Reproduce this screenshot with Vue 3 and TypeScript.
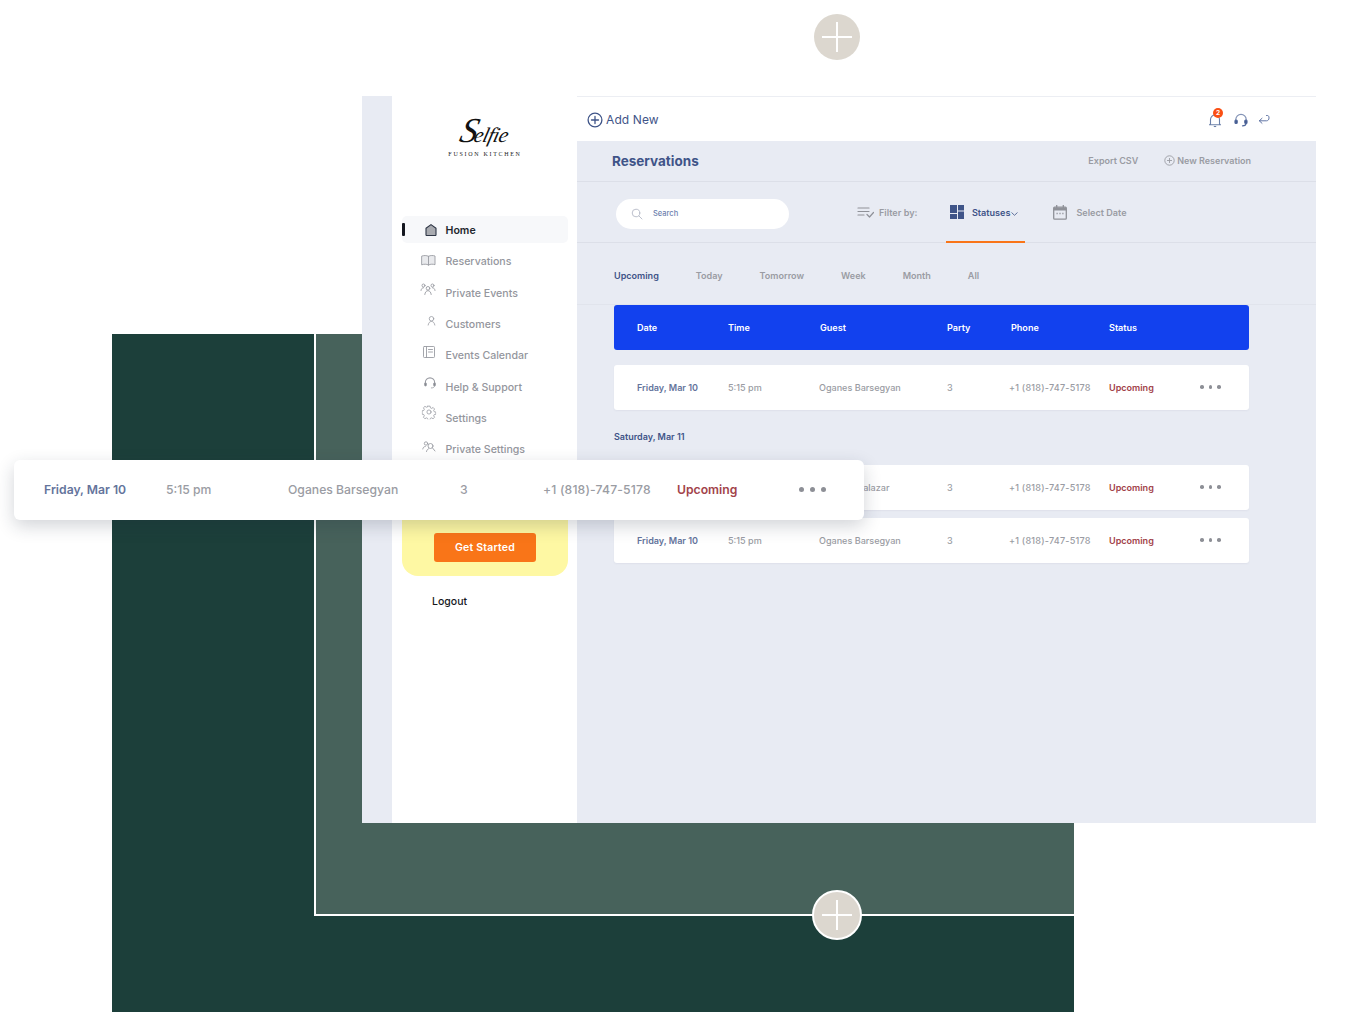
<script setup lang="ts">
interface Reservation {
  date: string;
  time: string;
  guest: string;
  party: number;
  phone: string;
  status: string;
}

interface NavItem {
  label: string;
  icon: string;
  active?: boolean;
}

const navItems: NavItem[] = [
  { label: 'Home', icon: 'home', active: true },
  { label: 'Reservations', icon: 'book' },
  { label: 'Private Events', icon: 'group' },
  { label: 'Customers', icon: 'user' },
  { label: 'Events Calendar', icon: 'ledger' },
  { label: 'Help & Support', icon: 'headset' },
  { label: 'Settings', icon: 'gear' },
  { label: 'Private Settings', icon: 'usersearch' },
];

const tabs = ['Upcoming', 'Today', 'Tomorrow', 'Week', 'Month', 'All'];
const columns = ['Date', 'Time', 'Guest', 'Party', 'Phone', 'Status'];

const base: Reservation = {
  date: 'Friday, Mar 10',
  time: '5:15 pm',
  guest: 'Oganes Barsegyan',
  party: 3,
  phone: '+1 (818)-747-5178',
  status: 'Upcoming',
};

// first row sits partly under the floating card, date and time are covered
const saturday: Reservation[] = [
  { ...base, date: '', time: '', guest: 'Maria A. Salazar' },
  base,
];
</script>

<template>
  <div class="canvas">
    <div class="block-dark"></div>
    <div class="block-light"></div>

    <div class="plus plus-top"><span class="plus-mark"></span></div>

    <div class="app">
      <div class="strip"></div>

      <aside class="sidebar">
        <div class="logo">
          <div class="logo-script"><span class="logo-cap">S</span>elfie</div>
          <div class="logo-sub">FUSION KITCHEN</div>
        </div>

        <nav class="nav">
          <a v-for="item in navItems" :key="item.label" class="nav-item" :class="{ active: item.active }">
            <span class="nav-icon" :class="`i-${item.icon}`">
              <svg width="16" height="16" viewBox="0 0 16 16" fill="none" stroke="#9a9ca3" stroke-width=".9" stroke-linecap="round" stroke-linejoin="round">
                <template v-if="item.icon === 'home'">
                  <path d="M3 6.200 8 2.600l5 3.600v6.600a.7.7 0 0 1-.7.7H3.700a.7.7 0 0 1-.7-.7z" fill="#a9abb0" stroke="#2e3645" stroke-width="1.100" />
                </template>
                <template v-else-if="item.icon === 'book'">
                  <path d="M1.500 3.500C3.500 2.800 6 2.800 8 3.800c2-1 4.500-1 6.500-.3v8.700c-2-.7-4.500-.7-6.500.3-2-1-4.500-1-6.500-.3z" fill="#e9eaed" />
                  <path d="M8 3.800v8.900" />
                </template>
                <template v-else-if="item.icon === 'group'">
                  <circle cx="8" cy="6.800" r="1.800" />
                  <path d="M4.800 13c.3-2.500 1.600-3.800 3.200-3.800s2.900 1.300 3.200 3.800" />
                  <circle cx="3.500" cy="4" r="1.500" />
                  <circle cx="12.500" cy="4" r="1.500" />
                  <path d="M1 9c.2-1.500 1-2.700 2.500-2.800M15 9c-.2-1.500-1-2.700-2.500-2.800" />
                </template>
                <template v-else-if="item.icon === 'user'">
                  <circle cx="8" cy="5.500" r="2.500" />
                  <path d="M4.300 12.500c.4-2.500 1.800-4 3.700-4s3.300 1.500 3.700 4" />
                </template>
                <template v-else-if="item.icon === 'ledger'">
                  <rect x="2.500" y="2.500" width="11" height="11" rx=".8" />
                  <path d="M5.500 2.500v11M7.500 5.500h4M7.500 8h4" />
                </template>
                <template v-else-if="item.icon === 'headset'">
                  <path d="M2.800 9V7.500a5.200 5.200 0 0 1 10.400 0V9" stroke-width="1.200" />
                  <rect x="2" y="7.800" width="2" height="3.500" rx=".9" fill="#85878e" />
                  <rect x="12" y="7.800" width="2" height="3.500" rx=".9" fill="#85878e" />
                  <path d="M13 11.500c0 1.400-1.500 2-3.500 2" />
                </template>
                <template v-else-if="item.icon === 'gear'">
                  <circle cx="8" cy="8" r="2.300" />
                  <path d="M6.800 1.500h2.400l.4 1.900 1.300.6 1.700-1 1.600 1.700-1 1.600.6 1.400 1.900.4v2.400l-1.900.4-.6 1.300 1 1.700-1.700 1.600-1.600-1-1.400.6-.4 1.900H6.800l-.4-1.900-1.300-.6-1.700 1-1.600-1.700 1-1.600-.6-1.400-1.900-.4V6.700l1.900-.4.6-1.300-1-1.700 1.700-1.600 1.600 1 1.400-.6z" />
                </template>
                <template v-else>
                  <circle cx="9.500" cy="7" r="2.500" />
                  <path d="M11.400 8.800 14 12M5.500 12.500c.3-1.500 1-2.300 2-2.700M4.300 7.500C2.900 7.500 2 8.500 1.800 10" />
                  <circle cx="5" cy="4.500" r="1.700" />
                </template>
              </svg>
            </span>
            <span class="nav-label">{{ item.label }}</span>
          </a>
        </nav>

        <div class="promo">
          <button class="promo-btn" type="button">Get Started</button>
        </div>
        <div class="logout">Logout</div>
      </aside>

      <main class="main">
        <header class="topbar">
          <div class="add-new">
            <svg width="16" height="16" viewBox="0 0 16 16" fill="none" stroke="#3f5488" stroke-width="1.300" stroke-linecap="round">
              <circle cx="8" cy="8" r="6.900" />
              <path d="M8 4.500v7M4.500 8h7" />
            </svg>
            <span>Add New</span>
          </div>
          <div class="top-icons">
            <span class="bell">
              <svg width="14" height="16" viewBox="0 0 14 16" fill="none" stroke="#6a7fa8" stroke-width="1.100" stroke-linejoin="round">
                <path d="M2.500 11.800V7.500a4.500 4.500 0 0 1 9 0v4.300l1 1h-11z" />
                <path d="M5.800 14.500h2.400" />
              </svg>
              <span class="badge">2</span>
            </span>
            <svg class="top-headset" width="14" height="14" viewBox="0 0 14 14" fill="none" stroke="#51689c" stroke-width="1.200" stroke-linecap="round">
              <path d="M1.800 8V6.500a5.200 5.200 0 0 1 10.400 0V8" stroke="#8393b6" />
              <rect x="1" y="7" width="2.200" height="3.500" rx=".9" fill="#3f5488" />
              <rect x="10.800" y="7" width="2.200" height="3.500" rx=".9" fill="#3f5488" />
              <path d="M12 10.500c0 1.500-1.500 2.300-3.500 2.300" />
            </svg>
            <svg width="12" height="11" viewBox="0 0 12 11" fill="none" stroke="#51689c" stroke-width=".9" stroke-linecap="round" stroke-linejoin="round">
              <path d="M8.500 1.500h1c1 0 1.500 1 1.500 2.500s-.8 2.800-2.500 2.800H1.500" />
              <path d="M4 4.300 1.300 6.800 4 9.300" />
            </svg>
          </div>
        </header>

        <section class="title-bar">
          <h1>Reservations</h1>
          <div class="title-actions">
            <span class="title-action">Export CSV</span>
            <span class="title-action new">
              <svg width="11" height="11" viewBox="0 0 11 11" fill="none" stroke="#9a9ca3" stroke-width=".9">
                <circle cx="5.500" cy="5.500" r="4.700" />
                <path d="M5.500 3v5M3 5.500h5" />
              </svg>
              New Reservation
            </span>
          </div>
        </section>

        <section class="filter-bar">
          <div class="search">
            <svg width="12" height="12" viewBox="0 0 12 12" fill="none" stroke="#b4b9c6" stroke-width=".9" stroke-linecap="round">
              <circle cx="5" cy="5" r="3.800" />
              <path d="M8 8l3 3" />
            </svg>
            <span>Search</span>
          </div>
          <div class="filter-label">
            <svg width="17" height="12" viewBox="0 0 17 12" fill="none" stroke="#8f9198" stroke-width="1.200" stroke-linecap="round" stroke-linejoin="round">
              <path d="M1 2h11M1 5.500h11M1 9h6M10 8.500l2.500 2.500 4-4.500" />
            </svg>
            <span>Filter by:</span>
          </div>
          <div class="statuses">
            <svg width="14" height="14" viewBox="0 0 14 14" fill="#3f5488">
              <rect x="0" y="0" width="7" height="8" />
              <rect x="8" y="0" width="6" height="5.500" />
              <rect x="0" y="9" width="7" height="5" />
              <rect x="8" y="6.500" width="6" height="7.500" />
            </svg>
            <span>Statuses</span>
            <svg class="chevron" width="7" height="4" viewBox="0 0 7 4" fill="none" stroke="#3f5488" stroke-width=".8">
              <path d="M.5.500 3.500 3.300 6.500.500" />
            </svg>
          </div>
          <div class="select-date">
            <svg width="14" height="15" viewBox="0 0 14 15" fill="none" stroke="#8f9198" stroke-width="1.300">
              <rect x=".7" y="2.200" width="12.600" height="12" rx="1" />
              <path d="M.7 4h12.600" stroke-width="3" />
              <path d="M3.700 0v3M10.300 0v3" />
              <path d="M3.500 8.500h1.200M6.400 8.500h1.200M9.300 8.500h1.200" />
            </svg>
            <span>Select Date</span>
          </div>
        </section>

        <section class="tabs">
          <span v-for="(tab, i) in tabs" :key="tab" class="tab" :class="{ current: i === 0 }">{{ tab }}</span>
        </section>

        <section class="table">
          <div class="table-head">
            <span v-for="col in columns" :key="col">{{ col }}</span>
          </div>

          <div class="row">
            <span class="r-date">{{ base.date }}</span>
            <span>{{ base.time }}</span>
            <span>{{ base.guest }}</span>
            <span>{{ base.party }}</span>
            <span class="r-phone">{{ base.phone }}</span>
            <span class="r-status">{{ base.status }}</span>
            <span class="dots"><i></i><i></i><i></i></span>
          </div>

          <div class="day">Saturday, Mar 11</div>

          <div v-for="(r, i) in saturday" :key="i" class="row tight">
            <span class="r-date">{{ r.date }}</span>
            <span>{{ r.time }}</span>
            <span>{{ r.guest }}</span>
            <span>{{ r.party }}</span>
            <span class="r-phone">{{ r.phone }}</span>
            <span class="r-status">{{ r.status }}</span>
            <span class="dots"><i></i><i></i><i></i></span>
          </div>
        </section>
      </main>
    </div>

    <div class="float-row">
      <span class="r-date">{{ base.date }}</span>
      <span>{{ base.time }}</span>
      <span>{{ base.guest }}</span>
      <span>{{ base.party }}</span>
      <span class="r-phone">{{ base.phone }}</span>
      <span class="r-status">{{ base.status }}</span>
      <span class="dots"><i></i><i></i><i></i></span>
    </div>

    <div class="plus plus-bottom"><span class="plus-mark"></span></div>
  </div>
</template>

<style>
body {
  margin: 0;
  background: #fff;
}
</style>

<style scoped>
.canvas {
  position: relative;
  width: 1358px;
  height: 1012px;
  overflow: hidden;
  background: #fff;
  font-family: Inter, "Liberation Sans", sans-serif;
}

/* free canvas layers */
.block-dark {
  position: absolute;
  left: 112px;
  top: 334px;
  width: 962px;
  height: 678px;
  background: #1c3f3a;
}

.block-light {
  position: absolute;
  left: 314px;
  top: 334px;
  width: 760px;
  height: 582px;
  box-sizing: border-box;
  background: #47625b;
  border-left: 2px solid #fff;
  border-bottom: 2px solid #fff;
}

.plus {
  position: absolute;
  border-radius: 50%;
  background: #dcd7cf;
  box-sizing: border-box;
  display: flex;
  align-items: center;
  justify-content: center;
}

.plus-top {
  left: 814px;
  top: 14px;
  width: 46px;
  height: 46px;
}

.plus-bottom {
  left: 812px;
  top: 890px;
  width: 50px;
  height: 50px;
  border: 2px solid #fff;
}

.plus-mark {
  position: relative;
  width: 30px;
  height: 30px;
}

.plus-mark::before,
.plus-mark::after {
  content: '';
  position: absolute;
  background: #fff;
}

.plus-mark::before {
  left: 14px;
  top: 0;
  width: 2px;
  height: 30px;
}

.plus-mark::after {
  left: 0;
  top: 14px;
  width: 30px;
  height: 2px;
}

.app {
  position: absolute;
  left: 362px;
  top: 96px;
  width: 954px;
  height: 727px;
  display: flex;
  background: #e8ebf3;
}

.strip {
  width: 30px;
  flex: none;
}

/* sidebar */
.sidebar {
  width: 185px;
  flex: none;
  background: #fff;
  display: flex;
  flex-direction: column;
  box-sizing: border-box;
  padding: 0 9px 0 10px;
}

.logo {
  height: 120px;
  display: flex;
  flex-direction: column;
  align-items: center;
  padding-top: 19px;
  box-sizing: border-box;
}

.logo-script {
  height: 31px;
  margin-bottom: 3px;
  font-family: "Liberation Serif", serif;
  font-style: italic;
  font-size: 21px;
  line-height: 31px;
  letter-spacing: -0.5px;
  color: #111;
  white-space: nowrap;
  transform: skewX(-14deg);
}

.logo-cap {
  font-size: 35px;
  letter-spacing: -3px;
}

.logo-sub {
  margin-top: 1px;
  font-family: "Liberation Serif", serif;
  font-size: 6px;
  line-height: 8px;
  letter-spacing: 1.7px;
  color: #222;
  white-space: nowrap;
}

.nav {
  display: flex;
  flex-direction: column;
  gap: 4.33px;
}

.nav-item {
  position: relative;
  height: 27px;
  display: flex;
  align-items: center;
  border-radius: 5px;
  font-size: 10.6px;
  font-weight: 500;
  color: #94969d;
}

.nav-item.active {
  background: #f7f8fa;
  color: #23262d;
  font-weight: 600;
}

.nav-item.active::before {
  content: '';
  position: absolute;
  left: 0;
  top: 7px;
  width: 2.500px;
  height: 13px;
  border-radius: 1px;
  background: #14171f;
}

.nav-icon {
  width: 16px;
  height: 16px;
  margin-left: 20px;
  margin-right: 7.500px;
  flex: none;
  display: flex;
}

.nav-label {
  padding-top: 2px;
}

/* each glyph sits a little off the label line in the reference */
.i-home { transform: translate(1px, 0); }
.i-book { transform: translate(-1.500px, -0.500px); }
.i-group { transform: translate(-2px, -2.500px); }
.i-user { transform: translate(1.500px, -2px) scale(0.9); }
.i-ledger { transform: translate(-1px, -3px); }
.i-headset { transform: translate(0, -3px) scale(0.9); }
.i-gear { transform: translate(-1px, -5px) scale(0.9); }
.i-usersearch { transform: translate(-1px, -2px); }

.promo {
  margin-top: 22px;
  height: 92px;
  border-radius: 0 0 16px 16px;
  background: #fef8a3;
  display: flex;
  justify-content: center;
  align-items: flex-end;
  padding-bottom: 14px;
  box-sizing: border-box;
}

.promo-btn {
  width: 102px;
  height: 29px;
  border: 0;
  border-radius: 3px;
  background: #f97518;
  color: #fff;
  font-family: inherit;
  font-size: 10.5px;
  font-weight: 600;
  letter-spacing: 0.2px;
}

.logout {
  margin: 19px 0 0 30px;
  font-size: 10.5px;
  line-height: 14px;
  font-weight: 500;
  color: #16181d;
}

/* main column */
.main {
  flex: 1;
  min-width: 0;
  display: flex;
  flex-direction: column;
}

.topbar {
  height: 45px;
  flex: none;
  box-sizing: border-box;
  background: #fff;
  border-top: 1px solid #eceef3;
  display: flex;
  align-items: center;
  justify-content: space-between;
  padding: 1px 45.500px 0 10px;
}

.add-new {
  display: flex;
  align-items: center;
  gap: 3px;
  font-size: 12px;
  letter-spacing: 0.1px;
  color: #3f5488;
}

.top-icons {
  display: flex;
  align-items: center;
  gap: 10px;
  margin-right: 1px;
}

.top-headset {
  margin-left: 2px;
}

.bell {
  position: relative;
  display: flex;
}

.badge {
  position: absolute;
  left: 5.500px;
  top: -3.500px;
  width: 10px;
  height: 10px;
  border-radius: 50%;
  background: #fa4f14;
  color: #fff;
  font-size: 6.500px;
  line-height: 10px;
  font-weight: 700;
  text-align: center;
}

.title-bar {
  height: 41px;
  flex: none;
  box-sizing: border-box;
  border-bottom: 1px solid #dcdfe8;
  display: flex;
  align-items: center;
  justify-content: space-between;
  padding: 0 65px 0 35px;
}

.title-bar h1 {
  margin: 0;
  font-size: 13.500px;
  font-weight: 700;
  color: #3f5488;
}

.title-actions {
  display: flex;
  gap: 26px;
  padding-bottom: 2px;
}

.title-action {
  display: flex;
  align-items: center;
  gap: 2px;
  font-size: 9px;
  font-weight: 600;
  color: #9a9ca3;
}

.filter-bar {
  height: 61px;
  flex: none;
  box-sizing: border-box;
  border-bottom: 1px solid #dcdfe8;
  display: flex;
  align-items: center;
  padding-left: 39px;
  font-size: 9.100px;
  font-weight: 600;
  color: #9a9ca3;
}

.search {
  width: 173px;
  height: 30px;
  margin-top: 4px;
  box-sizing: border-box;
  border-radius: 15px;
  background: #fff;
  display: flex;
  align-items: center;
  gap: 10px;
  padding: 0 0 1px 15px;
  font-size: 7.500px;
  font-weight: 500;
  color: #6d7fae;
}

.filter-label {
  margin-left: 68px;
  display: flex;
  align-items: center;
  gap: 5px;
}

.statuses {
  position: relative;
  margin-left: 32.500px;
  display: flex;
  align-items: center;
  color: #3f5488;
  gap: 8px;
}

.statuses::after {
  content: '';
  position: absolute;
  left: -4px;
  right: -7px;
  top: 36px;
  height: 2px;
  background: #f97518;
}

.chevron {
  margin: 4px 0 0 -7px;
}

.select-date {
  margin-left: 35px;
  display: flex;
  align-items: center;
  gap: 9px;
}

.tabs {
  height: 62px;
  flex: none;
  box-sizing: border-box;
  border-bottom: 1px solid #e1e4ec;
  display: flex;
  align-items: center;
  gap: 37px;
  padding: 4px 0 0 37px;
  font-size: 9.050px;
  font-weight: 600;
  color: #9a9ca3;
}

.tab.current {
  color: #3f5488;
}

.table {
  margin: 0 67px 0 37px;
  display: flex;
  flex-direction: column;
}

.table-head,
.row {
  height: 45px;
  box-sizing: border-box;
  display: grid;
  grid-template-columns: 91px 91px 128px 62px 100px 91px 1fr;
  align-items: center;
  padding: 0 0 1px 23px;
  border-radius: 3px;
  font-size: 9.050px;
}

.table-head {
  background: #1241ee;
  color: #fff;
  font-weight: 600;
}

.table-head span:nth-child(3) {
  padding-left: 1px;
}

.table-head span:nth-child(5) {
  padding-left: 2px;
}

.row {
  margin-top: 15px;
  background: #fff;
  color: #9a9ca3;
  font-weight: 500;
  box-shadow: 0 1px 2px rgba(60, 70, 100, 0.06);
}

.row.tight {
  margin-top: 8px;
}

.day {
  margin: 20px 0 10px;
  height: 17px;
  font-size: 9px;
  font-weight: 600;
  line-height: 14px;
  color: #3f5488;
}

.r-date {
  color: #64749c;
  font-weight: 600;
}

.r-phone {
  letter-spacing: 0.22px;
}

.r-status {
  color: #a2434a;
  font-weight: 600;
}

.dots {
  display: flex;
  gap: 5px;
}

.dots i {
  width: 3.500px;
  height: 3.500px;
  border-radius: 50%;
  background: #8d8f96;
}

.float-row {
  position: absolute;
  left: 14px;
  top: 460px;
  width: 850px;
  height: 60px;
  box-sizing: border-box;
  display: grid;
  grid-template-columns: 122px 122px 172px 83px 134px 122px 1fr;
  align-items: center;
  padding: 0 0 1px 30px;
  border-radius: 6px;
  background: #fff;
  color: #9a9ca3;
  font-size: 12.200px;
  font-weight: 500;
  box-shadow: 0 6px 18px rgba(30, 40, 60, 0.2);
}

.float-row .r-phone {
  letter-spacing: 0.16px;
}

.float-row .dots {
  gap: 6px;
}

.float-row .dots i {
  width: 5px;
  height: 5px;
}
</style>
